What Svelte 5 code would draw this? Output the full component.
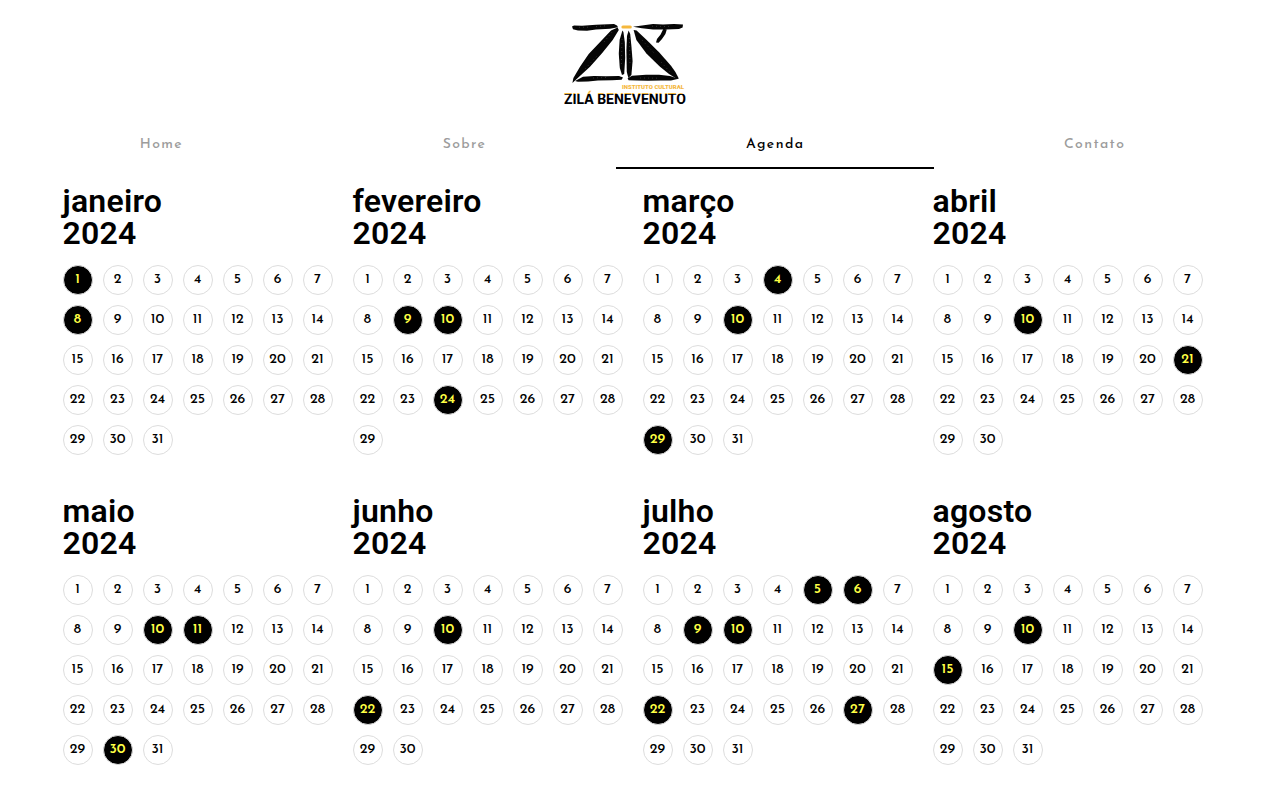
<script>
  const tabs = ['Home', 'Sobre', 'Agenda', 'Contato'];
  let active = $state('Agenda');

  const months = [
    { name: 'janeiro', days: 31, events: [1, 8] },
    { name: 'fevereiro', days: 29, events: [9, 10, 24] },
    { name: 'março', days: 31, events: [4, 10, 29] },
    { name: 'abril', days: 30, events: [10, 21] },
    { name: 'maio', days: 31, events: [10, 11, 30] },
    { name: 'junho', days: 30, events: [10, 22] },
    { name: 'julho', days: 31, events: [5, 6, 9, 10, 22, 27] },
    { name: 'agosto', days: 31, events: [10, 15] }
  ];
</script>

<header>
  <svg class="logo" viewBox="0 0 140 100" role="img" aria-label="Instituto Cultural Zilá Benevenuto">
    <defs>
      <linearGradient id="name-ink" gradientUnits="userSpaceOnUse" x1="0" y1="70" x2="0" y2="100">
        <stop offset="0.34" stop-color="#f5b83d" />
        <stop offset="0.34" stop-color="#000" />
      </linearGradient>
    </defs>
    <g fill="#050505">
      <path d="M16 12.6 L18 11.4 L26 11.8 L40 10.8 L58 10 L61 11.6 L62 13.2 L54 14.8 L40 15.6 L31 16.8 L22 16.6 L17 15.2 Z" />
      <path d="M61.6 13.4 L62.8 16 L56.7 26 L46 39.3 L34 52.7 L25 61 L16.4 69 L17.4 64 L24 52.7 L32.7 40 L46 26 L55 16.6 Z" />
      <path d="M19 67 L27 62.8 L38 62 L50 62.2 L63 62 L67 63.6 L65.6 65.8 L56 66.2 L42 66.6 L32 67.4 L22 67.8 Z" />
      <path d="M66.4 16.4 L67.4 18 L68.8 28 L69.2 44 L68.2 60 L66 61 L63.8 54 L62.8 40 L63.6 26 Z" />
      <path d="M72.6 16.4 L74.2 20 L75.4 32 L76.6 47 L75.4 61 L72.4 64 L70.8 58 L70.4 36 L71 22 Z" />
      <path d="M77.6 16 L80.6 16.6 L90.7 26 L103.3 38.6 L115 51.8 L119.4 58 L122.8 64.6 L121 65 L113 60 L104 52.7 L90.4 39.6 L80.4 26 Z" />
      <path d="M71.6 64.2 L76 61.8 L90 60.8 L103 60.8 L114 62 L122.6 64.8 L115 66.4 L105 66.4 L92 66.8 L81 66.4 L72.6 66.2 Z" />
      <path d="M77 12.8 L86 11.6 L97 10 L107 10.6 L118 10 L127 10.6 L126.6 13.4 L123 15 L110 15.6 L97 15.4 L86 14.2 Z" />
      <path d="M107.4 14.8 L110.8 15.4 L109.4 20 L106 25 L102.6 28.8 L100 28.4 L101 25 L104.6 20.6 Z" />
    </g>
    <path
      class="grain"
      d="M23 13.2 h10 M40 12.6 l12 -1 M96 12.2 l18 .4 M48 28 l8 -10 M29 55 l12 -13 M66 25 l-.6 25 M73.4 24 l.6 28 M86 26 l13 14 M105 48 l9 10 M37 64 l16 -.6 M84 64 l20 .2"
    />
    <rect x="65.4" y="11.4" width="10.4" height="3" rx="1.5" fill="#f5b83d" />
    <text class="subtitle" x="128" y="75" text-anchor="end">INSTITUTO CULTURAL</text>
    <text class="name" x="69" y="90" text-anchor="middle" fill="url(#name-ink)">ZILÁ BENEVENUTO</text>
  </svg>
  <nav aria-label="Principal">
    {#each tabs as tab}
      <button
        type="button"
        class:active={active === tab}
        aria-current={active === tab ? 'page' : undefined}
        onclick={() => (active = tab)}>{tab}</button>
    {/each}
  </nav>
</header>

<main>
  {#each months as month}
    <section>
      <h2>{month.name}<br />2024</h2>
      <div class="days">
        {#each Array.from({ length: month.days }, (_, i) => i + 1) as day}
          <button type="button" class="day" class:event={month.events.includes(day)}>{day}</button>
        {/each}
      </div>
    </section>
  {/each}
</main>

<style>
  :global(body) {
    margin: 0;
    background: #fff;
    color: #000;
  }

  header {
    display: flex;
    flex-direction: column;
    align-items: center;
    padding: 14px 10px 0;
  }

  .logo {
    width: 140px;
    height: 100px;
    margin-right: 13px;
  }

  .grain {
    fill: none;
    stroke: #777;
    stroke-width: 0.4;
    stroke-dasharray: 1 3;
  }

  .name {
    font: 700 14px Roboto, sans-serif;
  }

  .subtitle {
    font: 900 6px Roboto, sans-serif;
    fill: #f5b83d;
  }

  nav {
    display: flex;
    align-self: stretch;
    margin-top: 5px;
  }

  nav button {
    flex: 1 1 auto;
    height: 50px;
    padding: 2px 0 0;
    border: 0;
    border-bottom: 2px solid transparent;
    background: none;
    color: #9c9c9c;
    font: 500 14px 'Josefin Sans', Lato, sans-serif;
    letter-spacing: 0.1em;
    cursor: pointer;
  }

  nav button.active {
    color: #000;
    border-bottom-color: #000;
  }

  main {
    display: grid;
    grid-template-columns: repeat(auto-fit, 270px);
    justify-content: center;
    gap: 40px 20px;
    padding: 16px 20px 30px;
  }

  h2 {
    margin: 0 0 16px;
    font: 600 32px/32px Roboto, sans-serif;
    letter-spacing: 0.0075em;
  }

  .days {
    display: grid;
    grid-template-columns: repeat(7, 30px);
    gap: 10px;
  }

  .day {
    width: 30px;
    height: 30px;
    padding: 0 0 2px;
    border: 1px solid #ddd;
    border-radius: 50%;
    background: #fff;
    color: #000;
    font: 500 14px 'Josefin Sans', Lato, sans-serif;
    cursor: pointer;
  }

  .day.event {
    background: #000;
    color: #ff4;
    font-weight: 600;
  }
</style>
